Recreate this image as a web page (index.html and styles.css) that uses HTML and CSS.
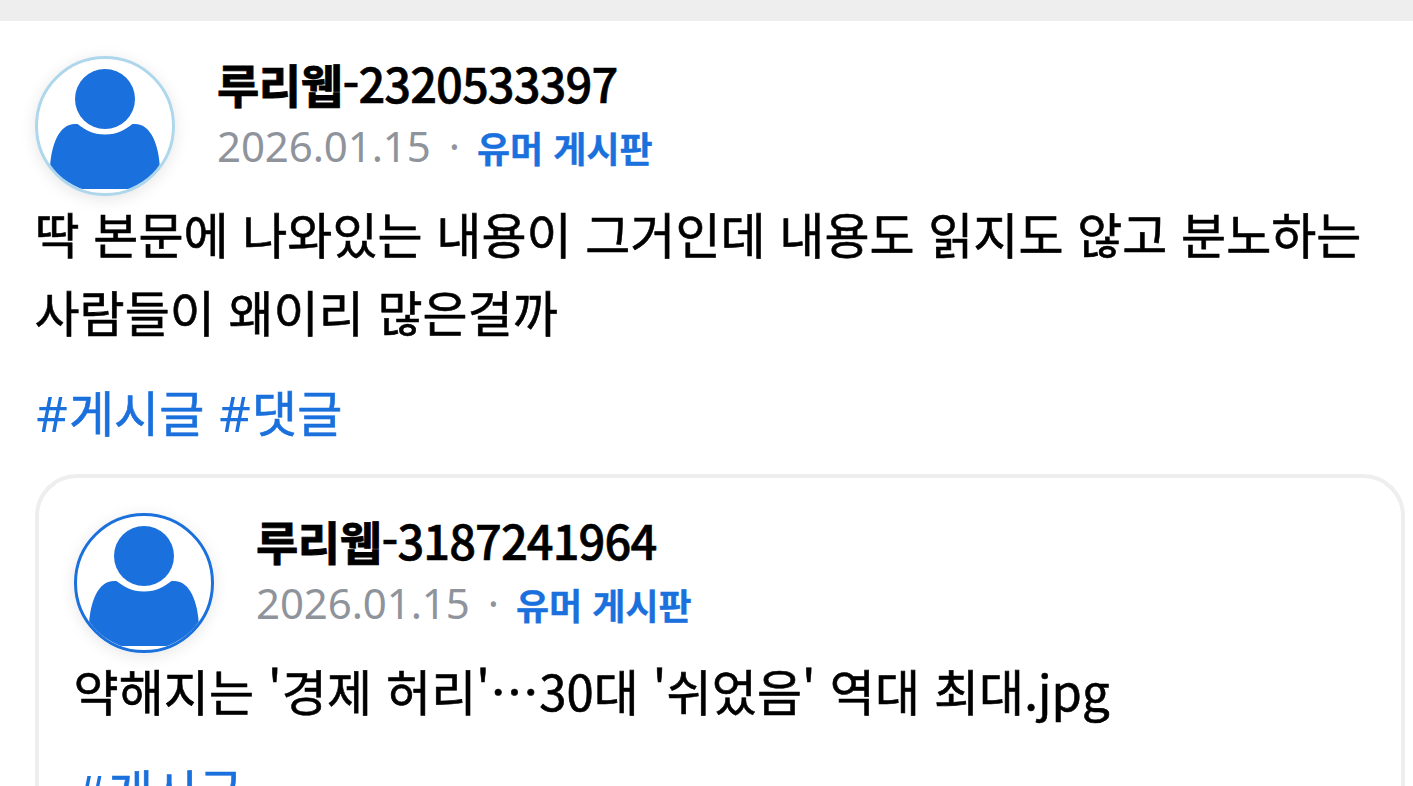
FILE: index.html
```html
<!DOCTYPE html>
<html lang="ko">
<head>
  <meta charset="UTF-8" />
  <meta name="viewport" content="width=device-width, initial-scale=1.0"/>
  <title>루리웹</title>
  <link rel="stylesheet" href="styles.css">
</head>
<body>
  <svg width="0" height="0" class="defs">
    <symbol id="user" viewBox="0 0 134 134">
      <circle cx="67" cy="40" r="30"/>
      <path d="M12 130V110C13 86 21 65 37 65H39.500C48 71 54 75.500 67 75.500S86 71 94.500 65H97C113 65 121 86 122 110V130Z"/>
    </symbol>
  </svg>
  <article class="post">
    <header class="profile">
      <div class="avatar avatar-light"><svg><use href="#user"/></svg></div>
      <div class="info">
        <strong class="name">루리웹<span class="num">-2320533397</span></strong>
        <div class="meta"><span class="date">2026.01.15</span><span class="dot">·</span><a class="board">유머 게시판</a></div>
      </div>
    </header>
    <p class="text">딱 본문에 나와있는 내용이 그거인데 내용도 읽지도 않고 분노하는<br>사람들이 왜이리 많은걸까</p>
    <div class="tags"><a><span class="hash">#</span>게시글</a> <a><span class="hash">#</span>댓글</a></div>
    <section class="quote">
      <header class="profile">
        <div class="avatar"><svg><use href="#user"/></svg></div>
        <div class="info">
          <strong class="name">루리웹<span class="num">-3187241964</span></strong>
          <div class="meta"><span class="date">2026.01.15</span><span class="dot">·</span><a class="board">유머 게시판</a></div>
        </div>
      </header>
      <p class="text">약해지는 '경제 허리'…30대 '쉬었음' 역대 최대.jpg</p>
      <div class="tags"><a><span class="hash">#</span>게시글</a></div>
    </section>
  </article>
</body>
</html>
```

FILE: styles.css
```css
* {
  margin: 0;
  padding: 0;
  box-sizing: border-box;
}
body {
  background: #fff;
  color: #000;
  font-family: "Noto Sans CJK KR", sans-serif;
}
.defs {
  display: none;
}
.post {
  height: 786px;
  overflow: hidden;
  border-top: 21px solid #eee;
  padding: 35px 8px 0 35px;
}
.profile {
  display: flex;
  height: 138px;
}
.avatar {
  width: 140px;
  height: 140px;
  border: 3px solid #1a70dc;
  border-radius: 50%;
  overflow: hidden;
  box-shadow: 0 3px 16px rgba(0, 0, 0, 0.1);
}
.avatar-light {
  border-color: #aed7ec;
}
.avatar svg {
  display: block;
  width: 134px;
  height: 134px;
  fill: #1a70dc;
}
.info {
  margin-left: 42px;
}
.name {
  display: block;
  height: 58px;
  font-size: 46px;
  line-height: 54px;
  font-weight: 700;
  letter-spacing: -0.5px;
  -webkit-text-stroke: 0.8px;
}
.num {
  font-size: 47px;
  font-weight: 500;
  letter-spacing: -0.9px;
  -webkit-text-stroke: 0.6px;
}
.meta {
  display: flex;
  height: 68px;
  line-height: 63px;
  font-size: 42px;
}
.date, .dot {
  color: #8f939b;
  font-family: "Noto Sans", sans-serif;
}
.date {
  letter-spacing: -0.1px;
}
.dot {
  margin: 0 17px 0 18px;
}
.board {
  color: #1a70dc;
  font-size: 36px;
  line-height: 67px;
  font-weight: 700;
  -webkit-text-stroke: 0.3px;
}
.text {
  margin-left: -0.5px;
  font-size: 49px;
  line-height: 78px;
  white-space: nowrap;
  -webkit-text-stroke: 0.6px;
}
.quote .text {
  letter-spacing: 0.1px;
}
.tags {
  margin-top: 22px;
  font-size: 49px;
  line-height: 78px;
  color: #1a70dc;
  -webkit-text-stroke: 0.6px;
}
.hash {
  padding: 0 1.2px;
  font-family: "Noto Sans", sans-serif;
  -webkit-text-stroke: 0;
}
.quote {
  margin-top: 22px;
  padding: 35px;
  border: 4px solid #eee;
  border-radius: 42px;
}
```
